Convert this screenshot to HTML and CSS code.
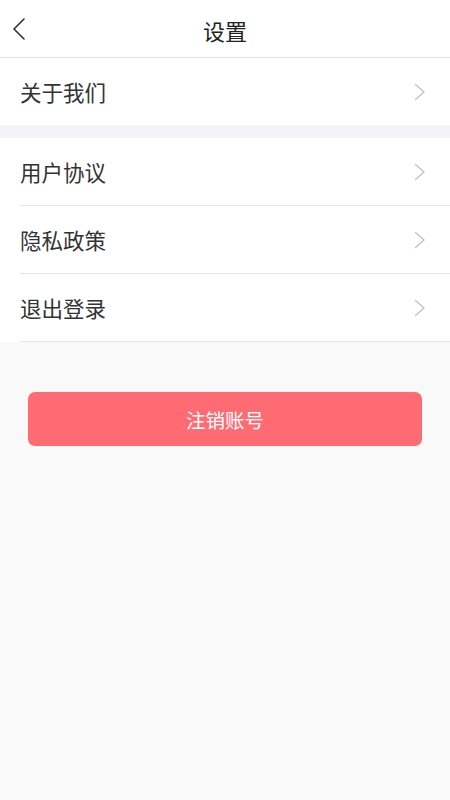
FILE: index.html
```html
<!DOCTYPE html>
<html lang="zh-CN">
<head>
<meta charset="utf-8">
<title>设置</title>
<link rel="stylesheet" href="styles.css">
</head>
<body>
<div class="page">
  <header class="nav">
    <span class="back">
      <svg width="14" height="24" viewBox="0 0 14 24"><path d="M11 2 L1 12 L11 22" fill="none" stroke="#333" stroke-width="1.6" stroke-linecap="round" stroke-linejoin="round"/></svg>
    </span>
    <h1 class="title">设置</h1>
  </header>
  <section class="group">
    <div class="row">
      <span class="label">关于我们</span>
      <svg class="arrow" width="12" height="18" viewBox="0 0 12 18"><path d="M1.5 1.5 L10 9 L1.5 16.5" fill="none" stroke="#c4c4c8" stroke-width="1.5" stroke-linecap="round" stroke-linejoin="round"/></svg>
    </div>
  </section>
  <div class="gap"></div>
  <section class="group">
    <div class="row line">
      <span class="label">用户协议</span>
      <svg class="arrow" width="12" height="18" viewBox="0 0 12 18"><path d="M1.5 1.5 L10 9 L1.5 16.5" fill="none" stroke="#c4c4c8" stroke-width="1.5" stroke-linecap="round" stroke-linejoin="round"/></svg>
    </div>
    <div class="row line">
      <span class="label">隐私政策</span>
      <svg class="arrow" width="12" height="18" viewBox="0 0 12 18"><path d="M1.5 1.5 L10 9 L1.5 16.5" fill="none" stroke="#c4c4c8" stroke-width="1.5" stroke-linecap="round" stroke-linejoin="round"/></svg>
    </div>
    <div class="row line">
      <span class="label">退出登录</span>
      <svg class="arrow" width="12" height="18" viewBox="0 0 12 18"><path d="M1.5 1.5 L10 9 L1.5 16.5" fill="none" stroke="#c4c4c8" stroke-width="1.5" stroke-linecap="round" stroke-linejoin="round"/></svg>
    </div>
  </section>
  <div class="actions">
    <button class="danger">注销账号</button>
  </div>
</div>
</body>
</html>
```
FILE: styles.css
```css
* { box-sizing: border-box; }
html, body { margin: 0; padding: 0; }
body {
  background: #f9f9f9;
  font-family: "Noto Sans CJK SC", "Noto Sans", sans-serif;
  color: #333;
}
.page { width: 450px; min-height: 800px; }
.nav {
  height: 58px;
  background: #fff;
  border-bottom: 1px solid #e2e2e2;
  display: flex;
  align-items: center;
  justify-content: center;
  position: relative;
}
.back {
  position: absolute;
  left: 13px;
  top: 17px;
  display: flex;
}
.title {
  margin: 0;
  font-size: 22px;
  font-weight: 400;
  color: #222;
  line-height: 1;
  padding-top: 2px;
}
.group { background: #fff; }
.row {
  height: 67px;
  display: flex;
  align-items: center;
  justify-content: space-between;
  padding: 0 24px 0 20px;
}
.row.line {
  height: 68px;
  border-bottom: 1px solid #e4e4e4;
  padding-top: 1px;
}
.group .row.line { margin-left: 20px; padding-left: 0; }
.label {
  font-size: 21.5px;
  color: #333;
  line-height: 1;
}
.gap { height: 13px; background: #f3f4f8; }
.actions { padding: 50px 28px 0 28px; }
.danger {
  width: 100%;
  height: 54px;
  border: none;
  border-radius: 7px;
  background: #ff6b73;
  color: #fff;
  font-family: "Noto Sans CJK SC", "Noto Sans", sans-serif;
  font-size: 19.5px;
  display: block;
}
```
